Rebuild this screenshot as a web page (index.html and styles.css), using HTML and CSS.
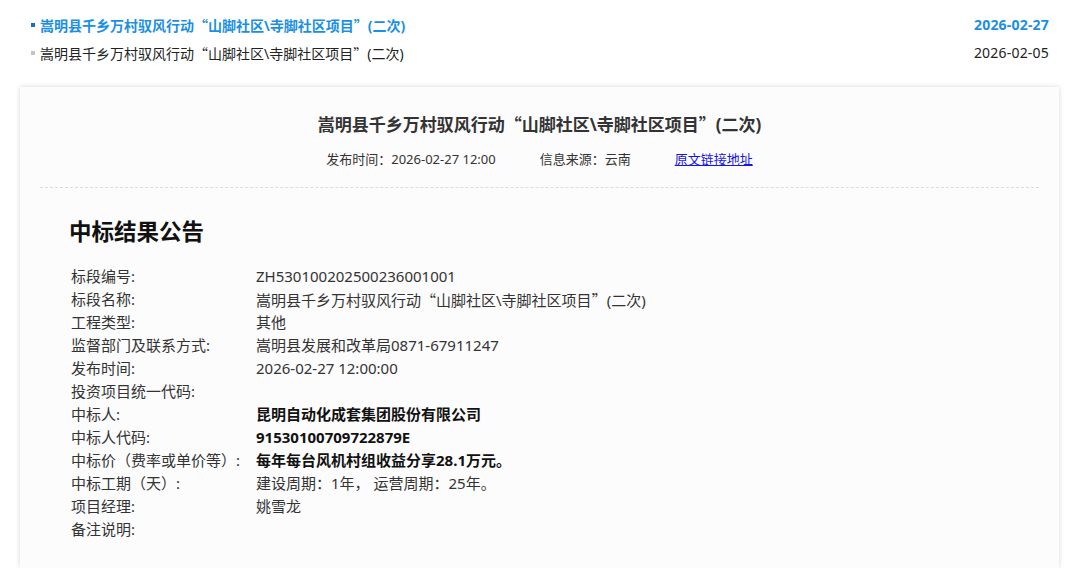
FILE: index.html
```html
<!DOCTYPE html>
<html lang="zh-CN">
<head>
<meta charset="utf-8">
<title>中标结果公告</title>
<link rel="stylesheet" href="styles.css">
</head>
<body>
<ul class="news">
  <li class="news-item active"><span class="dot"></span><a class="news-title">嵩明县千乡万村驭风行动<span class="q">“</span>山脚社区\寺脚社区项目<span class="q">”</span>(二次)</a><span class="news-date">2026-02-27</span></li>
  <li class="news-item"><span class="dot"></span><a class="news-title">嵩明县千乡万村驭风行动<span class="q">“</span>山脚社区\寺脚社区项目<span class="q">”</span>(二次)</a><span class="news-date">2026-02-05</span></li>
</ul>
<div class="card">
  <h1 class="card-title">嵩明县千乡万村驭风行动<span class="q">“</span>山脚社区\寺脚社区项目<span class="q">”</span>(二次)</h1>
  <div class="meta">
    <span>发布时间：2026-02-27 12:00</span>
    <span>信息来源：云南</span>
    <a class="src-link" href="#">原文链接地址</a>
  </div>
  <div class="divider"></div>
  <div class="content">
    <h2 class="notice-title">中标结果公告</h2>
    <div class="fields">
      <div class="row"><div class="label">标段编号:</div><div class="value">ZH530100202500236001001</div></div>
      <div class="row"><div class="label">标段名称:</div><div class="value">嵩明县千乡万村驭风行动<span class="q">“</span>山脚社区\寺脚社区项目<span class="q">”</span>(二次)</div></div>
      <div class="row"><div class="label">工程类型:</div><div class="value">其他</div></div>
      <div class="row"><div class="label">监督部门及联系方式:</div><div class="value">嵩明县发展和改革局0871-67911247</div></div>
      <div class="row"><div class="label">发布时间:</div><div class="value">2026-02-27 12:00:00</div></div>
      <div class="row"><div class="label">投资项目统一代码:</div><div class="value"></div></div>
      <div class="row"><div class="label">中标人:</div><div class="value bold">昆明自动化成套集团股份有限公司</div></div>
      <div class="row"><div class="label">中标人代码:</div><div class="value bold">91530100709722879E</div></div>
      <div class="row"><div class="label">中标价（费率或单价等）:</div><div class="value bold">每年每台风机村组收益分享28.1万元。</div></div>
      <div class="row"><div class="label">中标工期（天）:</div><div class="value">建设周期：1年， 运营周期：25年。</div></div>
      <div class="row"><div class="label">项目经理:</div><div class="value">姚雪龙</div></div>
      <div class="row"><div class="label">备注说明:</div><div class="value"></div></div>
    </div>
  </div>
</div>
</body>
</html>
```

FILE: styles.css
```css
html, body {
  margin: 0;
  padding: 0;
  background: #fff;
}
body {
  font-family: "Noto Sans", "Noto Sans CJK SC", sans-serif;
  color: #333;
  font-size: 14px;
  overflow: hidden;
  height: 568px;
}
.q {
  font-family: "Noto Sans CJK SC", sans-serif;
}
.news {
  list-style: none;
  margin: 0;
  padding: 11px 31px 0 31px;
}
.news-item {
  display: flex;
  align-items: center;
  height: 28px;
  line-height: 28px;
  font-size: 14px;
  color: #222;
}
.dot {
  width: 4px;
  height: 4px;
  background: #c4c4c4;
  margin-right: 5px;
  flex: none;
}
.news-title {
  flex: 1;
}
.news-date {
  letter-spacing: 0.2px;
}
.news-item.active {
  color: #1a8fe3;
  font-weight: bold;
}
.news-item.active .dot {
  background: #1a6fc0;
}
.card {
  margin: 20px 21px 0 20px;
  background: #fcfcfc;
  box-shadow: 0 0 5px rgba(0,0,0,0.16);
  padding: 0 20px;
  height: 481px;
}
.card-title {
  margin: 0;
  padding-top: 24px;
  font-size: 17px;
  line-height: 26px;
  text-align: center;
  font-weight: bold;
  color: #333;
}
.meta {
  display: flex;
  justify-content: center;
  gap: 44px;
  margin-top: 11px;
  font-size: 13px;
  line-height: 20px;
  color: #333;
}
.src-link {
  color: #1515e8;
  text-decoration: underline;
}
.divider {
  margin-top: 18px;
  border-top: 1px dashed #dcdcdc;
}
.content {
  padding: 0 29px;
}
.notice-title {
  margin: 29px 0 0 0;
  font-size: 22.5px;
  line-height: 30px;
  font-weight: bold;
  color: #111;
}
.fields {
  margin-top: 18px;
  font-size: 15px;
  line-height: 23px;
  color: #333;
}
.row {
  display: flex;
  height: 23px;
}
.label {
  flex: none;
  width: 185px;
  padding-left: 2px;
  white-space: nowrap;
}
.value {
  flex: 1;
  white-space: nowrap;
}
.bold {
  font-weight: bold;
  color: #111;
}
```
